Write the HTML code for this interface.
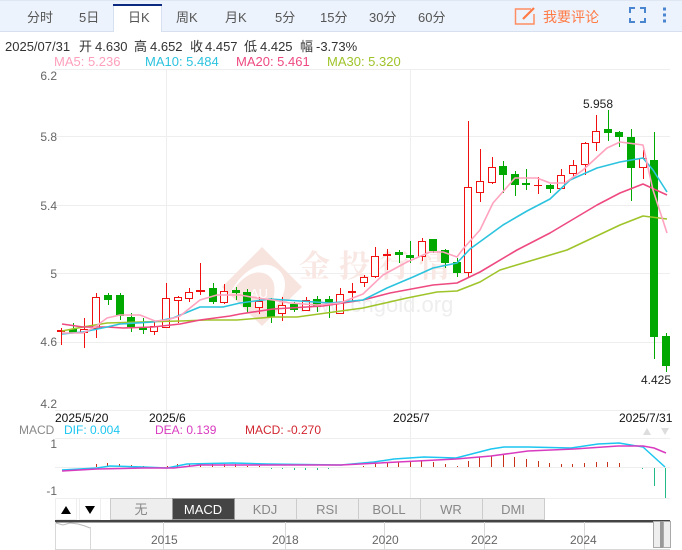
<!DOCTYPE html>
<html><head><meta charset="utf-8"><style>
html,body{margin:0;padding:0;background:#fff}
svg{display:block}
text{font-family:"Liberation Sans","Noto Sans CJK SC",sans-serif}
</style></head><body>
<svg width="682" height="550" viewBox="0 0 682 550" xmlns="http://www.w3.org/2000/svg">
<rect width="682" height="550" fill="#fff"/>
<!-- top bar -->
<rect x="0" y="0" width="682" height="31" fill="#edf3fc"/>
<rect x="0" y="0" width="682" height="1" fill="#dfe7f3"/>
<rect x="0" y="31" width="682" height="1" fill="#d6e0ee"/>
<rect x="113" y="4" width="49" height="28" fill="#fff"/>
<rect x="113" y="4" width="49" height="2" fill="#0b2a80"/>
<rect x="161" y="6" width="1" height="26" fill="#d6e0ee"/>
<rect x="113" y="6" width="1" height="26" fill="#d6e0ee"/>
<g font-size="13" fill="#555">
<text x="27" y="22">分时</text><text x="79" y="22">5日</text><text x="128" y="22">日K</text><text x="176" y="22">周K</text><text x="225" y="22">月K</text><text x="275" y="22">5分</text><text x="320" y="22">15分</text><text x="369" y="22">30分</text><text x="418" y="22">60分</text>
</g>
<path d="M531 9H515.5V24H534V14" fill="none" stroke="#ff8d63" stroke-width="1.5"/>
<path d="M523 19L534 8" fill="none" stroke="#ff7a45" stroke-width="2.2"/>
<text x="543" y="22" font-size="14" fill="#ff7a45">我要评论</text>
<path d="M630 13V8H635M640 8H645V13M645 18V22H640M635 22H630V18" fill="none" stroke="#4a86d0" stroke-width="2"/>
<path d="M663 7.5h3v3h-3zM663 13.5h3v3h-3zM663 19.5h3v3h-3z" fill="#4a86d0"/>
<!-- info rows -->
<text y="51" font-size="13" fill="#333"><tspan x="5">2025/07/31</tspan><tspan x="79">开</tspan><tspan x="95">4.630</tspan><tspan x="134">高</tspan><tspan x="150">4.652</tspan><tspan x="190">收</tspan><tspan x="205">4.457</tspan><tspan x="244">低</tspan><tspan x="260">4.425</tspan><tspan x="300">幅</tspan><tspan x="316">-3.73%</tspan></text>
<g font-size="13">
<text x="54" y="66" fill="#ff9fbc">MA5: 5.236</text>
<text x="145" y="66" fill="#2cc3de">MA10: 5.484</text>
<text x="236" y="66" fill="#ee4a80">MA20: 5.461</text>
<text x="327" y="66" fill="#9fc42a">MA30: 5.320</text>
</g>
<!-- grid -->
<path d="M55 69.5H670M55 136.5H670M55 205.5H670M55 273.5H670M55 342.5H670M55 410.5H670M55 438.5H670M55 467.5H670M55 498.5H670M166.5 69V498M410.5 69V498" stroke="#eeeeee" fill="none"/>
<!-- watermark -->
<path d="M262 247L302 287L262 326L222 287Z" fill="#f8e4df"/>
<path d="M230 294C240 272 262 258 276 268C288 276 288 292 276 306L268 314C276 296 278 280 266 274C252 268 240 280 230 294Z" fill="#fff"/>
<text x="250" y="298" font-size="13" fill="#fff">AU</text>
<text x="299" y="277" font-size="31" font-weight="bold" fill="#f8e7e3" style="font-family:'Noto Serif CJK SC',serif" letter-spacing="9">金投行情</text>
<text x="298" y="312" font-size="22" fill="#efeeee">www.cngold.org</text>
<!-- axis labels -->
<g font-size="12" fill="#666" text-anchor="end">
<text x="57" y="80">6.2</text><text x="57" y="141">5.8</text><text x="57" y="210">5.4</text><text x="57" y="278">5</text><text x="57" y="346">4.6</text><text x="57" y="408">4.2</text>
<text x="57" y="448">1</text><text x="57" y="495">-1</text>
</g>
<!-- candles -->
<g shape-rendering="crispEdges">
<path fill="none" stroke="#00a800" d="M73.5 323V333M108.5 293V305M120.5 293V320M131.5 313V332M143.5 318V334M213.5 283V304M236.5 287V300M247.5 289V313M271.5 298V323M294.5 302V312M317.5 296V312M329.5 296V318M399.5 250V263M410.5 241V263M433.5 239V253M445.5 249V268M457.5 258V277M503.5 161V193M515.5 171V196M526.5 169V190M550.5 184V193M608.5 110V141M619.5 131V147M631.5 129V201M654.5 132V359M666.5 333V372"/>
<path fill="#00a800" d="M69 329h8v4h-8zM104 295h8v5h-8zM116 295h8v21h-8zM127 317h8v10h-8zM139 327h8v3h-8zM209 288h8v14h-8zM232 290h8v3h-8zM243 292h8v15h-8zM267 300h8v17h-8zM290 304h8v6h-8zM313 299h8v8h-8zM325 299h8v4h-8zM395 252h8v3h-8zM406 255h8v3h-8zM429 239h8v12h-8zM441 250h8v13h-8zM453 262h8v11h-8zM499 166h8v9h-8zM511 174h8v11h-8zM522 183h8v2h-8zM546 185h8v4h-8zM604 129h8v4h-8zM615 132h8v5h-8zM627 137h8v31h-8zM650 160h8v177h-8zM662 336h8v30h-8z"/>
<path fill="none" stroke="#f01010" d="M61.5 328V345M84.5 318V348M96.5 293V338M154.5 322V335M166.5 283V327M178.5 296V323M189.5 288V302M200.5 263V295M224.5 284V304M259.5 297V314M282.5 297V321M306.5 297V311M340.5 288V313M352.5 283V301M364.5 275V287M375.5 247V278M387.5 249V270M422.5 238V261M468.5 121V278M480.5 149V202M492.5 157V184M538.5 177V194M561.5 169V188M573.5 160V178M585.5 142V175M596.5 115V151M643.5 150V179"/>
<path fill="#f01010" d="M57 330h8v2h-8zM196 290h9v2h-9zM348 291h8v2h-8zM383 254h8v2h-8zM534 185h8v1h-8z"/>
<g fill="#fff" stroke="#f01010">
<rect x="80.5" y="329.5" width="7" height="3"/>
<rect x="92.5" y="297.5" width="7" height="31"/>
<rect x="150.5" y="326.5" width="7" height="5"/>
<rect x="162.5" y="298.5" width="7" height="29"/>
<rect x="174.5" y="297.5" width="7" height="3"/>
<rect x="185.5" y="292.5" width="7" height="6"/>
<rect x="220.5" y="291.5" width="7" height="11"/>
<rect x="255.5" y="301.5" width="7" height="6"/>
<rect x="278.5" y="305.5" width="7" height="8"/>
<rect x="302.5" y="300.5" width="7" height="10"/>
<rect x="336.5" y="294.5" width="7" height="19"/>
<rect x="360.5" y="277.5" width="7" height="5"/>
<rect x="371.5" y="256.5" width="7" height="20"/>
<rect x="418.5" y="241.5" width="7" height="15"/>
<rect x="464.5" y="187.5" width="7" height="85"/>
<rect x="476.5" y="181.5" width="7" height="11"/>
<rect x="488.5" y="167.5" width="7" height="15"/>
<rect x="557.5" y="175.5" width="7" height="13"/>
<rect x="569.5" y="165.5" width="7" height="8"/>
<rect x="581.5" y="143.5" width="7" height="21"/>
<rect x="592.5" y="131.5" width="7" height="11"/>
<rect x="639.5" y="158.5" width="7" height="9"/>
</g>
</g>
<!-- MA lines -->
<g fill="none" stroke-width="1.6" stroke-linejoin="round">
<polyline stroke="#9fc42a" points="62,331 83,327 107,323 140,322 180,321 207,320 237,320 273,317 297,317 363,308 407,298 437,292 457,291 480,282 500,270 530,261 567,250 620,225 643,216 667,219"/>
<polyline stroke="#ee4a80" points="62,324 83,327 107,327 123,328 153,327 180,324 200,320 230,316 240,314 273,309 323,306 363,300 390,293 433,285 457,283 480,272 517,250 550,233 597,205 620,193 643,184 667,195"/>
<polyline stroke="#2cc3de" points="62,334 83,332 107,327 120,324 153,322 173,318 200,307 223,307 240,303 270,299 300,301 330,303 363,300 387,288 413,277 433,268 457,263 470,249 503,225 527,211 550,199 570,180 597,168 620,162 643,158 653,170 667,192"/>
<polyline stroke="#ffa3bf" points="62,333 83,333 95,327 107,318 120,315 140,315 155,321 167,320 180,316 200,300 217,295 240,295 257,298 273,300 290,303 317,305 340,303 363,294 383,275 407,262 430,252 443,252 457,257 463,249 480,230 493,203 515,178 537,178 550,183 565,183 583,170 607,148 620,142 643,145 653,190 667,233"/>
</g>
<text x="583" y="108" font-size="12" fill="#222">5.958</text>
<text x="641" y="384" font-size="12" fill="#222">4.425</text>
<!-- dates -->
<g font-size="12" fill="#111">
<text x="55" y="422">2025/5/20</text><text x="149" y="422">2025/6</text><text x="393" y="422">2025/7</text><text x="619" y="422">2025/7/31</text>
</g>
<g font-size="12">
<text x="19" y="434" fill="#888">MACD</text>
<text x="64" y="434" fill="#1cc6f0">DIF: 0.004</text>
<text x="155" y="434" fill="#d93bc0">DEA: 0.139</text>
<text x="245" y="434" fill="#d22630">MACD: -0.270</text>
</g>
<path d="M643 435L647 428L651 435ZM661 428H669L665 435Z" fill="#dddddd"/>
<!-- MACD hist -->
<g shape-rendering="crispEdges" fill="none">
<path stroke="#c8321a" d="M96.5 464V467M107.5 463V467M119.5 464V467M131.5 465V467M143.5 466V467M167.5 466V467M177.5 464V467M189.5 464V467M200.5 463V467M212.5 464V467M224.5 464V467M235.5 464V467M247.5 466V467M259.5 466V467M363.5 466V467M375.5 463V467M387.5 462V467M398.5 462V467M410.5 461V467M421.5 461V467M433.5 462V467M445.5 464V467M457.5 466V467M468.5 461V467M479.5 457V467M491.5 456V467M503.5 454V467M514.5 457V467M526.5 459V467M538.5 461V467M549.5 463V467M561.5 464V467M572.5 464V467M584.5 463V467M596.5 462V467M607.5 462V467M619.5 463V467"/>
<path stroke="#22bb88" d="M271.5 468V469M282.5 468V469M294.5 468V470M305.5 468V470M317.5 468V470M328.5 468V469M642.5 468V469M654.5 468V486M665.5 468V498"/>
</g>
<g fill="none" stroke-width="1.5" stroke-linejoin="round">
<polyline stroke="#1cc6f0" points="62,470 97,468 110,466 143,467 167,468 187,464 233,463 267,464 341,465 374,462 394,459 424,457 456,458 491,449 504,447 528,447 571,448 598,444 619,443 643,447 665,467"/>
<polyline stroke="#d93bc0" points="62,471 97,469 143,468 174,468 200,465 240,465 341,465 456,459 491,456 528,451 574,449 618,446 643,446 654,448 666,453"/>
</g>
<!-- index buttons -->
<g shape-rendering="crispEdges">
<rect x="55.5" y="498.5" width="21" height="21" fill="#fff" stroke="#eeeeee"/>
<rect x="79.5" y="498.5" width="21" height="21" fill="#fff" stroke="#eeeeee"/>
<g fill="#eeeeee" stroke="#cccccc">
<rect x="110.5" y="498.5" width="62" height="21"/><rect x="234.5" y="498.5" width="62" height="21"/><rect x="296.5" y="498.5" width="62" height="21"/><rect x="358.5" y="498.5" width="62" height="21"/><rect x="420.5" y="498.5" width="62" height="21"/><rect x="482.5" y="498.5" width="62" height="21"/>
</g>
<rect x="172.5" y="498.5" width="62" height="21" fill="#444" stroke="#999"/>
</g>
<path d="M61 514L66 506L71 514ZM85 506H95L90 514Z" fill="#000"/>
<g font-size="13" fill="#888" text-anchor="middle">
<text x="141" y="514">无</text><text x="203" y="514" fill="#fff">MACD</text><text x="265" y="514">KDJ</text><text x="327" y="514">RSI</text><text x="389" y="514">BOLL</text><text x="451" y="514">WR</text><text x="513" y="514">DMI</text>
</g>
<!-- navigator -->
<rect x="55" y="520" width="615" height="2.5" fill="#444"/>
<path d="M55.5 522V549.5H670M90.5 527V549M163.5 522V549M285.5 522V549M384.5 522V549M484.5 522V549M584.5 522V549" fill="none" stroke="#d8d8d8" shape-rendering="crispEdges"/>
<path d="M56 523L63 525L70 523L78 524L85 526L90 528" fill="none" stroke="#bbb"/>
<g font-size="12" fill="#666">
<text x="151" y="544">2015</text><text x="272" y="544">2018</text><text x="372" y="544">2020</text><text x="471" y="544">2022</text><text x="570" y="544">2024</text>
</g>
<g shape-rendering="crispEdges">
<rect x="653.5" y="521.5" width="7" height="26" fill="#eee" stroke="#aaa"/>
<rect x="660" y="521" width="3" height="27" fill="#999"/>
<rect x="663.5" y="521.5" width="7" height="26" fill="#eee" stroke="#aaa"/>
</g>
</svg>
</body></html>
